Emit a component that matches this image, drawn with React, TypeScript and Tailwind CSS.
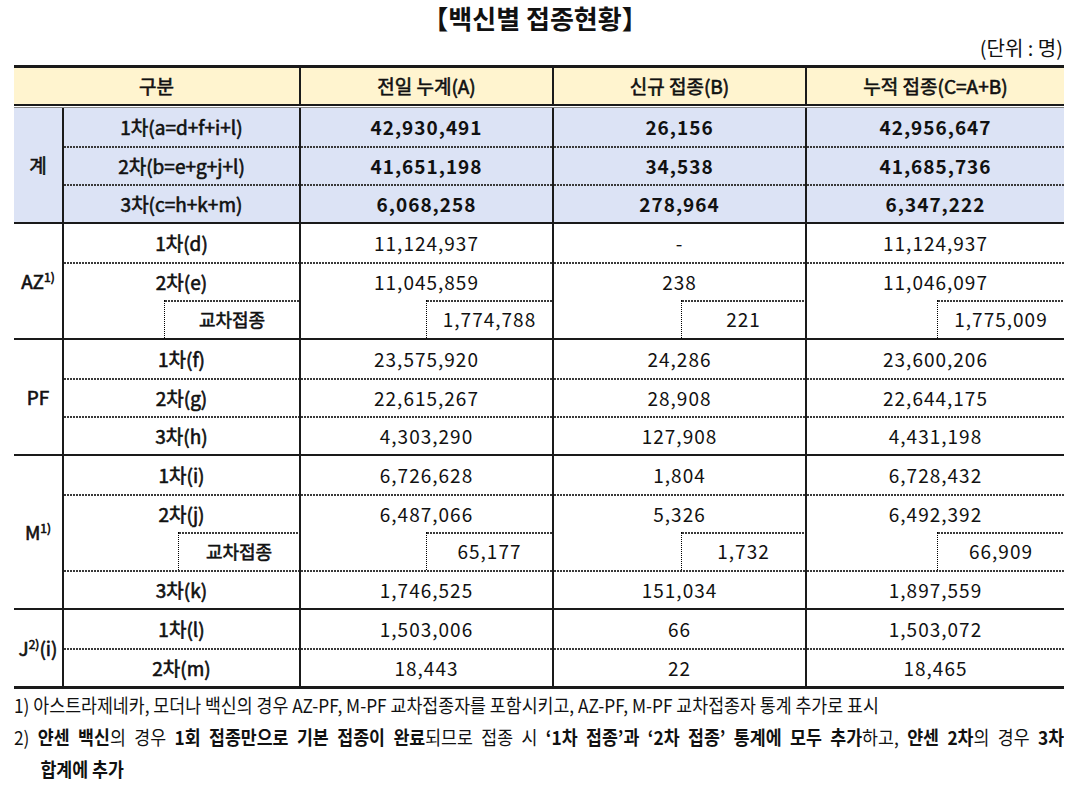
const font = "font-['Noto_Sans_CJK_KR','Noto_Sans',sans-serif]";
const medium = "[-webkit-text-stroke:0.6px_#111]";
const dots = "h-[2px] shrink-0 bg-[image:repeating-linear-gradient(90deg,#3a3a3a_0_2px,transparent_2px_3px)]";

type Row = { label: string; values: string[]; cross?: string };
type Group = { name: React.ReactNode; total?: boolean; rows: Row[] };

const groups: Group[] = [
  {
    name: "계",
    total: true,
    rows: [
      { label: "1차(a=d+f+i+l)", values: ["42,930,491", "26,156", "42,956,647"] },
      { label: "2차(b=e+g+j+l)", values: ["41,651,198", "34,538", "41,685,736"] },
      { label: "3차(c=h+k+m)", values: ["6,068,258", "278,964", "6,347,222"] },
    ],
  },
  {
    name: (
      <>
        AZ<sup className="-top-[7px] text-[12px]">1)</sup>
      </>
    ),
    rows: [
      { label: "1차(d)", values: ["11,124,937", "-", "11,124,937"] },
      { label: "2차(e)", values: ["11,045,859", "238", "11,046,097"] },
      { label: "교차접종", values: ["1,774,788", "221", "1,775,009"], cross: "w-[135px]" },
    ],
  },
  {
    name: "PF",
    rows: [
      { label: "1차(f)", values: ["23,575,920", "24,286", "23,600,206"] },
      { label: "2차(g)", values: ["22,615,267", "28,908", "22,644,175"] },
      { label: "3차(h)", values: ["4,303,290", "127,908", "4,431,198"] },
    ],
  },
  {
    name: (
      <>
        M<sup className="-top-[7px] text-[12px]">1)</sup>
      </>
    ),
    rows: [
      { label: "1차(i)", values: ["6,726,628", "1,804", "6,728,432"] },
      { label: "2차(j)", values: ["6,487,066", "5,326", "6,492,392"] },
      { label: "교차접종", values: ["65,177", "1,732", "66,909"], cross: "w-[121px]" },
      { label: "3차(k)", values: ["1,746,525", "151,034", "1,897,559"] },
    ],
  },
  {
    name: (
      <>
        J<sup className="-top-[7px] text-[12px]">2)</sup>(i)
      </>
    ),
    rows: [
      { label: "1차(l)", values: ["1,503,006", "66", "1,503,072"] },
      { label: "2차(m)", values: ["18,443", "22", "18,465"] },
    ],
  },
];

const boxW = ["w-[126px]", "w-[124px]", "w-[127px]"];

// sub-row box for 교차접종, dotted top and left edge
function CrossBox({ w, children, className = "" }: { w: string; children: React.ReactNode; className?: string }) {
  return (
    <div className="flex h-full justify-end">
      <div className={`${w} flex h-full flex-col border-l border-dotted border-black`}>
        <div className={dots} />
        <div className={`flex flex-1 items-center justify-center pb-[2px] ${className}`}>{children}</div>
      </div>
    </div>
  );
}

function BodyRow({ row, first, total }: { row: Row; first: boolean; total?: boolean }) {
  const line = !first && !row.cross;
  return (
    <div className="flex h-[38px]">
      <div className={`flex w-[237px] flex-col border-r-2 border-r-[#1a1a1a] ${medium}`}>
        {line && <div className={dots} />}
        <div className="flex-1">
          {row.cross ? (
            <CrossBox w={row.cross} className="text-[18px]">
              {row.label}
            </CrossBox>
          ) : (
            <div className="flex h-full items-center justify-center">{row.label}</div>
          )}
        </div>
      </div>
      {row.values.map((v, i) => (
        <div
          key={i}
          className={`flex flex-col tracking-[1px] ${i === 2 ? "w-[257px]" : "w-[253px] border-r-2 border-r-[#1a1a1a]"} ${
            total ? "font-bold" : ""
          }`}
        >
          {line && <div className={dots} />}
          <div className="flex-1">
            {row.cross ? (
              <CrossBox w={boxW[i]}>{v}</CrossBox>
            ) : (
              <div className="flex h-full items-center justify-center">{v}</div>
            )}
          </div>
        </div>
      ))}
    </div>
  );
}

export default function App() {
  return (
    <div className={`${font} h-[806px] w-[1080px] overflow-hidden bg-white text-[#111]`}>
      <h1 className="pt-[2px] pr-[10px] text-center text-[26px] leading-[32px] font-bold">【백신별 접종현황】</h1>
      <div className="pr-[17px] text-right text-[20px] leading-[28px]">(단위 : 명)</div>

      <div className="mt-[3px] ml-[14px] w-[1050px] text-[19px]">
        <div className={`grid h-[41px] grid-cols-[287px_253px_253px_257px] border-t-[3px] border-b-2 border-[#1a1a1a] bg-[#fff4cf] ${medium}`}>
          <div className="flex items-center justify-center border-r-2 border-[#1a1a1a]">구분</div>
          <div className="flex items-center justify-center border-r-2 border-[#1a1a1a]">전일 누계(A)</div>
          <div className="flex items-center justify-center border-r-2 border-[#1a1a1a]">신규 접종(B)</div>
          <div className="flex items-center justify-center">누적 접종(C=A+B)</div>
        </div>
        <div className="mt-px h-px bg-[#8a8a8a]" />

        <div className="border-b-[3px] border-[#1a1a1a]">
          {groups.map((g, gi) => (
            <div
              key={gi}
              className={`flex ${gi > 0 ? "border-t-2 border-[#1a1a1a]" : ""} ${g.total ? "bg-[#dce3f5]" : ""}`}
            >
              <div className={`flex w-[50px] shrink-0 items-center justify-center border-r-2 border-[#1a1a1a] ${medium}`}>
                <span>{g.name}</span>
              </div>
              <div className="flex-1">
                {g.rows.map((r, ri) => (
                  <BodyRow key={ri} row={r} first={ri === 0} total={g.total} />
                ))}
              </div>
            </div>
          ))}
        </div>
      </div>

      <div className="ml-[14px] w-[1050px] overflow-hidden">
        <div className="w-[1154px] origin-left scale-x-[0.91] text-[19px] leading-[32px]">
          <p>1) 아스트라제네카, 모더나 백신의 경우 AZ-PF, M-PF 교차접종자를 포함시키고, AZ-PF, M-PF 교차접종자 통계 추가로 표시</p>
          <p className="text-justify [text-align-last:justify]">
            2) <b>얀센 백신</b>의 경우 <b>1회 접종만으로 기본 접종이 완료</b>되므로 접종 시{" "}
            <b>‘1차 접종’과 ‘2차 접종’ 통계에 모두 추가</b>하고, <b>얀센 2차</b>의 경우 <b>3차</b>
          </p>
          <p className="pl-[29px]">
            <b>합계에 추가</b>
          </p>
        </div>
      </div>
    </div>
  );
}
